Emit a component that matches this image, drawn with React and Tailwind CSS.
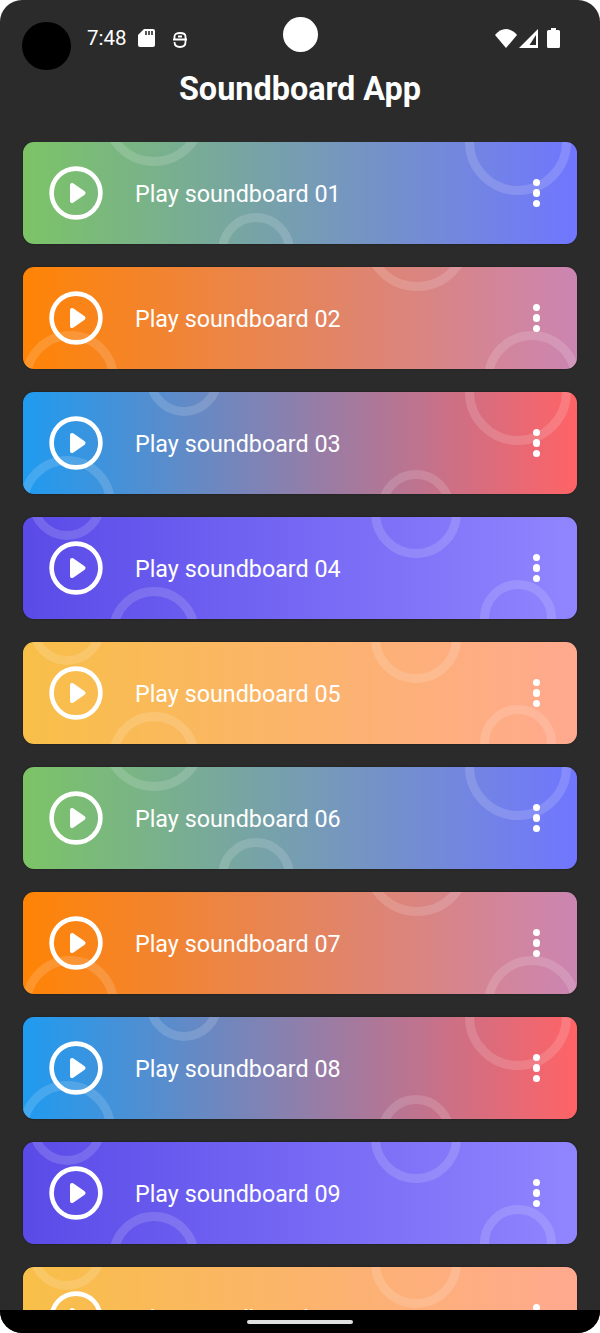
import React from "react";

const themes = [
  {
    bg: "from-[#7cc466] to-[#7076ff]",
    rings: [
      "left-[79px] top-[-80px] w-[104px] h-[104px]",
      "left-[195px] top-[71px] w-[76px] h-[76px]",
      "left-[442px] top-[-53px] w-[106px] h-[106px]",
    ],
  },
  {
    bg: "from-[#ff8405] to-[#cb85b2]",
    rings: [
      "left-[-1px] top-[64px] w-[96px] h-[96px]",
      "left-[340px] top-[-84px] w-[108px] h-[108px]",
      "left-[461px] top-[64px] w-[96px] h-[96px]",
    ],
  },
  {
    bg: "from-[#1f9bf0] to-[#ff6366]",
    rings: [
      "left-[123px] top-[-52px] w-[76px] h-[76px]",
      "left-[442px] top-[-53px] w-[106px] h-[106px]",
      "left-[-4px] top-[64px] w-[96px] h-[96px]",
      "left-[355px] top-[78px] w-[76px] h-[76px]",
    ],
  },
  {
    bg: "from-[#5a4be8] to-[#9185ff]",
    rings: [
      "left-[6px] top-[-53px] w-[76px] h-[76px]",
      "left-[348px] top-[-49px] w-[90px] h-[90px]",
      "left-[86px] top-[70px] w-[90px] h-[90px]",
      "left-[457px] top-[63px] w-[76px] h-[76px]",
    ],
  },
  {
    bg: "from-[#f8bf48] to-[#ffa98f]",
    rings: [
      "left-[6px] top-[-53px] w-[76px] h-[76px]",
      "left-[348px] top-[-49px] w-[90px] h-[90px]",
      "left-[86px] top-[70px] w-[90px] h-[90px]",
      "left-[457px] top-[63px] w-[76px] h-[76px]",
    ],
  },
];

const boards = ["01", "02", "03", "04", "05", "06", "07", "08", "09", "10"];

function PlayIcon() {
  return (
    <svg width="56" height="56" viewBox="0 0 56 56" className="shrink-0">
      <circle cx="28" cy="28" r="24.4" fill="none" stroke="white" strokeWidth="4.6" />
      <path d="M24 20 L35.5 28 L24 36 Z" fill="white" stroke="white" strokeWidth="4" strokeLinejoin="round" />
    </svg>
  );
}

function SoundCard({ num, theme }) {
  return (
    <div className={`relative shrink-0 h-[102px] rounded-[11px] overflow-hidden bg-linear-to-r/srgb shadow-[0_0_1.5px_#151515] ${theme.bg}`}>
      {theme.rings.map((ring) => (
        <div key={ring} className={`absolute rounded-full border-[9px] border-white/15 ${ring}`} />
      ))}
      <div className="relative h-full flex items-center pl-[25px] pr-[37px]">
        <PlayIcon />
        <span className="ml-[31px] mt-[3px] flex-1 text-[23.3px] text-white">Play soundboard {num}</span>
        <div className="flex flex-col gap-[3px]">
          <span className="block w-[7.5px] h-[7.5px] rounded-full bg-white" />
          <span className="block w-[7.5px] h-[7.5px] rounded-full bg-white" />
          <span className="block w-[7.5px] h-[7.5px] rounded-full bg-white" />
        </div>
      </div>
    </div>
  );
}

function StatusBar() {
  return (
    <div className="h-[65px] shrink-0 flex items-start justify-between pt-[28px] pl-[87px] pr-[40px]">
      <div className="flex items-center h-5 text-white text-[20.5px]">
        <span className="mt-[1px]">7:48</span>
        <svg width="17" height="18" viewBox="0 0 17 18" className="ml-[11px]">
          <path
            d="M6 0 H15 a2 2 0 0 1 2 2 V16 a2 2 0 0 1 -2 2 H2 a2 2 0 0 1 -2 -2 V6 Z"
            fill="white"
          />
          <path d="M8 2 V6 M11 2 V6 M14 2 V6" stroke="#2b2b2b" strokeWidth="1.6" />
        </svg>
        <svg width="16" height="16" viewBox="0 0 16 16" className="ml-[17px] mt-[4px]" fill="none" stroke="white" strokeWidth="1.8">
          <path d="M2.5 7 V4.5 C2.5 2 5 1 8 1 C11 1 13.5 2 13.5 4.5 V7" />
          <path d="M1 7.5 H15" />
          <path d="M2.5 10 C2.5 13.5 5 15 8 15 C11 15 13.5 13.5 13.5 10 V8" />
          <path d="M6 4.5 H10" />
        </svg>
      </div>
      <div className="flex items-center">
        <svg width="22" height="19" viewBox="0 0 22 19">
          <path d="M0 6 C6 -2 16 -2 22 6 L11 19 Z" fill="white" />
        </svg>
        <svg width="19" height="19" viewBox="0 0 19 19" className="ml-[2px]">
          <path d="M19 0 V19 H0 Z M17 6 L10.5 16 H17 Z" fill="white" fillRule="evenodd" />
        </svg>
        <svg width="13" height="20" viewBox="0 0 13 20" className="ml-[9px]">
          <path d="M4 0 H9 V2 H11.5 a1.5 1.5 0 0 1 1.5 1.5 V18.5 a1.5 1.5 0 0 1 -1.5 1.5 H1.5 a1.5 1.5 0 0 1 -1.5 -1.5 V3.5 a1.5 1.5 0 0 1 1.5 -1.5 H4 Z" fill="white" />
        </svg>
      </div>
    </div>
  );
}

export default function App() {
  return (
    <div className="w-[600px] h-[1333px] bg-white font-['Roboto',sans-serif]">
      <div className="relative w-full h-full flex flex-col overflow-hidden rounded-[22px] bg-[#2b2b2b]">
        <div className="absolute left-[22px] top-[22px] w-[49px] h-[48px] rounded-full bg-black" />
        <div className="absolute left-[283px] top-[17px] w-[35px] h-[35px] rounded-full bg-white" />

        <StatusBar />
        <h1 className="shrink-0 h-[48px] mb-[29px] flex items-center justify-center text-[32.4px] font-bold leading-none text-white">
          Soundboard App
        </h1>

        <div className="flex-1 min-h-0 overflow-hidden flex flex-col gap-[23px] px-[23px]">
          {boards.map((num, i) => (
            <SoundCard key={num} num={num} theme={themes[i % themes.length]} />
          ))}
        </div>

        <div className="shrink-0 h-[23px] bg-black flex items-center justify-center">
          <div className="w-[106px] h-1 rounded-full bg-[#e0e0e0]" />
        </div>
      </div>
    </div>
  );
}
